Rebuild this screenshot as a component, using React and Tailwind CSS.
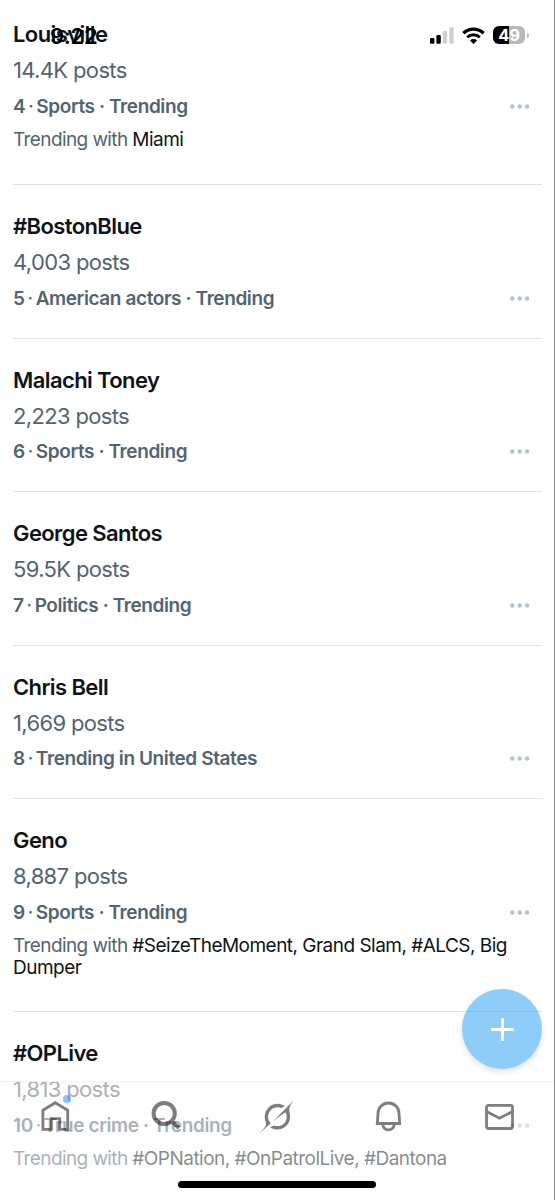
const trends = [
  { name: 'Louisville', posts: '14.4K posts', rank: 4, category: 'Sports · Trending', related: 'Miami' },
  { name: '#BostonBlue', posts: '4,003 posts', rank: 5, category: 'American actors · Trending' },
  { name: 'Malachi Toney', posts: '2,223 posts', rank: 6, category: 'Sports · Trending' },
  { name: 'George Santos', posts: '59.5K posts', rank: 7, category: 'Politics · Trending' },
  { name: 'Chris Bell', posts: '1,669 posts', rank: 8, category: 'Trending in United States' },
  { name: 'Geno', posts: '8,887 posts', rank: 9, category: 'Sports · Trending', related: '#SeizeTheMoment, Grand Slam, #ALCS, Big Dumper' },
  { name: '#OPLive', posts: '1,813 posts', rank: 10, category: 'True crime · Trending', related: '#OPNation, #OnPatrolLive, #Dantona' },
]

function MoreDots() {
  return (
    <svg width="32" height="5" viewBox="0 0 32 5" fill="#b3c3cd" className="mb-0.5">
      <circle cx="2.3" cy="2.5" r="2.2" />
      <circle cx="9.7" cy="2.5" r="2.2" />
      <circle cx="17.1" cy="2.5" r="2.2" />
    </svg>
  )
}

function Trend({ trend }) {
  return (
    <li className="border-b border-[#e0e3e5] pt-[25px] first:pb-px last:border-0">
      <h2 className="text-[22px] leading-8 font-semibold tracking-[-0.6px] text-[#0f1419]">{trend.name}</h2>
      <p className="text-[22px] leading-[41px] font-normal tracking-[-0.65px] text-[#536471]">{trend.posts}</p>
      <div className="flex items-center justify-between h-[31px] pt-px">
        <p className="text-[19px] font-semibold tracking-[-0.4px] text-[#536471]">
          {trend.rank}
          <span className="mx-[3px] font-normal">·</span>
          {trend.category}
        </p>
        <MoreDots />
      </div>
      {trend.related ? (
        <p className="pt-[7px] pb-8 text-[19px] leading-[22px] tracking-[-0.52px] text-[#0f1419]">
          <span className="tracking-[-0.6px] text-[#536471]">Trending with </span>
          {trend.related}
        </p>
      ) : (
        <div className="h-[23.5px]" />
      )}
    </li>
  )
}

function StatusBar() {
  return (
    <div className="absolute inset-x-0 top-0 flex h-[70px] items-center justify-between pl-[50px] pr-[25px] text-black">
      <span className="pt-0.5 text-[22px] font-semibold tracking-[-0.3px]">9:22</span>
      <div className="flex items-center gap-2">
        <svg width="24" height="17" viewBox="0 0 24.500 17">
          <rect x="0" y="11" width="4.500" height="6" rx="1.3" />
          <rect x="6.500" y="8" width="4.500" height="9" rx="1.3" />
          <rect x="13" y="4" width="4.500" height="13" rx="1.3" fill="#cfcfcf" />
          <rect x="19.700" y="0" width="4.500" height="17" rx="1.3" fill="#cfcfcf" />
        </svg>
        <svg width="23" height="17" viewBox="0 0 23 17" fill="none" stroke="#000">
          <path d="M1.400 6.300a14.500 14.500 0 0 1 20.200 0" strokeWidth="3.3" />
          <path d="M5.200 10.300a9 9 0 0 1 12.600 0" strokeWidth="3" />
          <path d="M11.500 17l-3.600-3.500a5.200 5.200 0 0 1 7.200 0z" fill="#000" stroke="none" />
        </svg>
        <div className="flex items-center gap-0.5">
          <div className="flex h-[18px] w-8 items-center justify-center rounded-[6px] bg-linear-to-r from-black from-50% to-[#b8b8b8] to-50% pt-px text-[16.500px] leading-none font-bold tracking-[-0.3px] text-white">
            49
          </div>
          <span className="h-[5px] w-[2px] rounded-r-full bg-[#b8b8b8]" />
        </div>
      </div>
    </div>
  )
}

const iconProps = {
  width: 40,
  height: 40,
  viewBox: '0 0 40 40',
  fill: 'none',
  stroke: '#000',
  strokeWidth: 2.8,
  className: 'opacity-50',
}

function HomeIcon() {
  return (
    <div className="relative">
      <svg {...iconProps}>
        <path d="M7.900 14.300 20.300 6.700l12.400 7.600v19.100h-8V22.600h-8.300v10.800H7.900z" />
      </svg>
      <span className="absolute top-[-1px] right-1 h-2 w-2 rounded-full bg-[#1d9bf0]/55" />
    </div>
  )
}

function SearchIcon() {
  return (
    <svg {...iconProps} strokeWidth={4}>
      <path d="M25.500 25l7.500 7M28.800 17.500a10.600 10.600 0 1 1-21.200 0 10.600 10.600 0 0 1 21.200 0z" />
    </svg>
  )
}

function GrokIcon() {
  return (
    <svg width="34" height="33" viewBox="0 0 33 32" className="opacity-50">
      <path d="M12.745 20.54l10.970-8.190c.539-.4 1.307-.244 1.564.38 1.349 3.288.746 7.241-1.938 9.955-2.683 2.714-6.417 3.310-9.830 1.954l-3.728 1.745c5.347 3.697 11.840 2.782 15.898-1.324 3.219-3.255 4.216-7.692 3.284-11.693l.008.009c-1.351-5.878.332-8.227 3.782-13.031L33 0l-4.540 4.590v-.014L12.743 20.544m-2.263 1.987c-3.837-3.707-3.175-9.446.1-12.755 2.420-2.449 6.388-3.448 9.852-1.979l3.720-1.737c-.67-.49-1.530-1.017-2.515-1.387-4.455-1.854-9.789-.931-13.410 2.728-3.483 3.523-4.579 8.940-2.697 13.561 1.405 3.454-.899 5.898-3.220 8.364C1.490 30.200.666 31.074 0 32l10.478-9.466" />
    </svg>
  )
}

function BellIcon() {
  return (
    <svg {...iconProps}>
      <path d="M9.300 27.500l.7-10a10.500 10.500 0 0 1 21 0l.7 10zM14.800 28.500a5.700 5.400 0 0 0 11.400 0" />
    </svg>
  )
}

function MailIcon() {
  return (
    <svg {...iconProps}>
      <path d="M9.500 9.300h22a2 2 0 0 1 2 2v19.200a2 2 0 0 1-2 2h-22a2 2 0 0 1-2-2V11.300a2 2 0 0 1 2-2zM7.500 15.500l13 6.700 13-6.700" />
    </svg>
  )
}

function TabBar() {
  return (
    <nav className="absolute inset-x-0 bottom-0 h-[119px] border-t border-[#eff1f3] bg-[#fdfdff]/50">
      <div className="grid h-[68px] grid-cols-5 items-center justify-items-center">
        <HomeIcon />
        <SearchIcon />
        <GrokIcon />
        <BellIcon />
        <MailIcon />
      </div>
      <div className="mx-auto mt-[31px] h-[7px] w-[198px] rounded-full bg-black" />
    </nav>
  )
}

export default function App() {
  return (
    <div className="relative h-[1200px] w-[555px] overflow-hidden border-r border-[#8b8b8b] bg-white font-['Inter',sans-serif]">
      <ul className="-mt-[7px] pl-[13px] pr-3">
        {trends.map((t) => (
          <Trend key={t.rank} trend={t} />
        ))}
      </ul>
      <StatusBar />
      <button className="absolute right-3 bottom-[131px] flex h-20 w-20 items-center justify-center rounded-full bg-[#1d9bf0]/50 shadow-[0_3px_6px_rgba(0,0,0,0.12)]">
        <svg width="23" height="23" viewBox="0 0 24 24" stroke="#fff" strokeWidth="3">
          <path d="M12 0v24M0 12h24" />
        </svg>
      </button>
      <TabBar />
    </div>
  )
}
